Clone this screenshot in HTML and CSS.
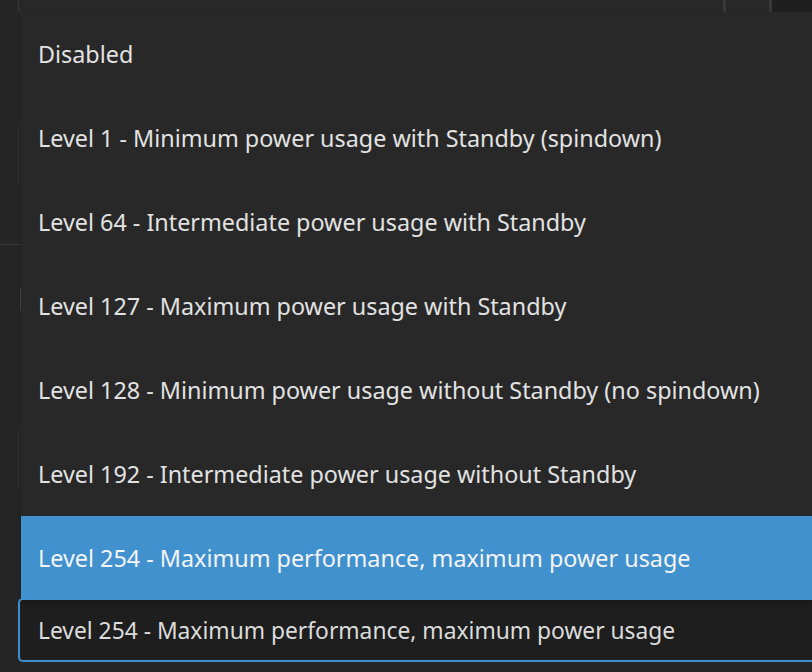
FILE: index.html
```html
<!DOCTYPE html>
<html lang="en">

<head>
    <meta charset="UTF-8">
    <meta name="viewport" content="width=device-width, initial-scale=1.0">
    <title>Power Management</title>
    <link rel="stylesheet" href="styles.css">
</head>

<body>
    <div class="page">
        <div class="topbar">
            <div class="top-field"></div>
            <div class="top-sep"></div>
            <div class="top-btn"></div>
            <div class="top-sep"></div>
            <div class="top-dark"></div>
        </div>
        <div class="field field-first"></div>
        <div class="divider"></div>
        <div class="check"></div>
        <div class="field field-second"></div>
        <div class="select">Level 254 - Maximum performance, maximum power usage</div>
    </div>

    <div class="dropdown">
        <div class="option">Disabled</div>
        <div class="option">Level 1 - Minimum power usage with Standby (spindown)</div>
        <div class="option">Level 64 - Intermediate power usage with Standby</div>
        <div class="option">Level 127 - Maximum power usage with Standby</div>
        <div class="option">Level 128 - Minimum power usage without Standby (no spindown)</div>
        <div class="option">Level 192 - Intermediate power usage without Standby</div>
        <div class="option selected">Level 254 - Maximum performance, maximum power usage</div>
    </div>
</body>

</html>
```

FILE: styles.css
```css
body {
    font-family: "Noto Sans", Roboto, sans-serif;
    margin: 0;
    padding: 0;
    height: 672px;
    overflow: hidden;
    background-color: #262626;
    color: #e2e2e2;
    position: relative;
}

.page {
    display: flex;
    flex-direction: column;
}

.topbar {
    display: flex;
    height: 13px;
    padding-left: 18px;
}

.top-field {
    width: 704px;
    border-left: 1px solid #363636;
    border-bottom: 1px solid #363636;
    border-bottom-left-radius: 4px;
    background-color: #282828;
}

.top-sep {
    width: 3px;
    background-color: #383838;
}

.top-btn {
    width: 43px;
    background-color: #282828;
}

.top-dark {
    flex: 1;
    background-color: #1f1f1f;
}

.field {
    margin-left: 18px;
    height: 63px;
    width: 700px;
    border: 1px solid #333;
    border-radius: 5px;
}

.field-first {
    margin-top: 108px;
}

.field-second {
    margin-top: 114px;
}

.divider {
    margin-top: 58px;
    height: 1px;
    background-color: #3a3a3a;
}

.check {
    margin-top: 43px;
    margin-left: 20px;
    width: 1px;
    height: 23px;
    background-color: #444;
}

.select {
    margin-top: 108px;
    margin-left: 18px;
    height: 60px;
    border: 2px solid #3f8fcf;
    border-right: none;
    border-radius: 5px 0 0 5px;
    background-color: #1e1e1e;
    padding-left: 18px;
    display: flex;
    align-items: center;
    font-size: 22.8px;
    color: #dcdcdc;
    white-space: nowrap;
    overflow: hidden;
}

/* menu overlay */
.dropdown {
    position: absolute;
    top: 12px;
    left: 21px;
    right: 0;
    background-color: #282828;
    box-shadow: 0 2px 4px rgba(0, 0, 0, 0.25);
    overflow: hidden;
}

.option {
    height: 84px;
    padding-left: 17px;
    display: flex;
    align-items: center;
    font-size: 23.35px;
    white-space: nowrap;
}

.option.selected {
    background-color: #4191cf;
    color: #f4f4f4;
}
```
